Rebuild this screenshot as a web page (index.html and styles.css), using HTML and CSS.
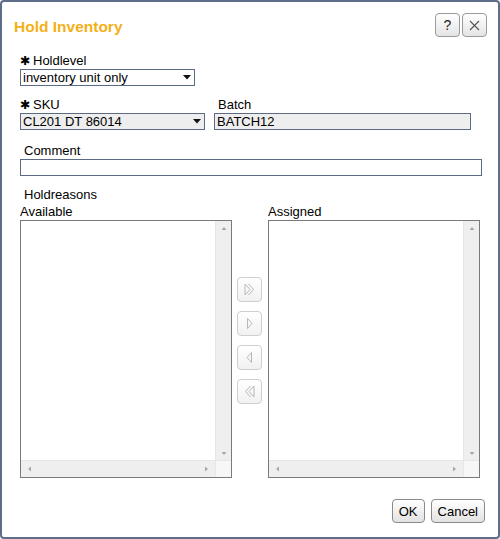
FILE: index.html
```html
<!DOCTYPE html>
<html>
<head>
<meta charset="utf-8">
<link rel="stylesheet" href="styles.css">
</head>
<body>
<div class="dialog">
  <div class="header">
    <div class="title">Hold Inventory</div>
    <div class="tools">
      <button class="tool">?</button>
      <button class="tool"><svg width="11" height="11" viewBox="0 0 11 11"><path d="M1 1 L10 10 M10 1 L1 10" stroke="#555" stroke-width="1.1" fill="none"/></svg></button>
    </div>
  </div>
  <div class="content">
    <div class="label req"><span class="star">✱</span>Holdlevel</div>
    <div class="select w1"><span>inventory unit only</span><svg class="caret" width="8" height="5" viewBox="0 0 8 5"><path d="M0 0 H8 L4 4.5 Z" fill="#111"/></svg></div>

    <div class="row2">
      <div class="col">
        <div class="label req"><span class="star">✱</span>SKU</div>
        <div class="select w2 ro"><span>CL201 DT 86014</span><svg class="caret" width="8" height="5" viewBox="0 0 8 5"><path d="M0 0 H8 L4 4.5 Z" fill="#111"/></svg></div>
      </div>
      <div class="col">
        <div class="label ind">Batch</div>
        <div class="input w3 ro">BATCH12</div>
      </div>
    </div>

    <div class="label ind mt13">Comment</div>
    <div class="input w4"></div>

    <div class="label ind mt11">Holdreasons</div>

    <div class="lists">
      <div class="listcol">
        <div class="label">Available</div>
        <div class="list">
          <div class="area"></div>
          <div class="vbar"><svg width="16" height="8" viewBox="0 0 16 8"><path d="M5.5 6 L10.5 6 L8 3 Z" fill="#a8a8a8"/></svg><svg width="16" height="8" viewBox="0 0 16 8"><path d="M5.5 2 L10.5 2 L8 5 Z" fill="#a8a8a8"/></svg></div>
          <div class="hbar"><svg width="8" height="16" viewBox="0 0 8 16"><path d="M6 5.5 L6 10.5 L3 8 Z" fill="#a8a8a8"/></svg><svg width="8" height="16" viewBox="0 0 8 16"><path d="M2 5.5 L2 10.5 L5 8 Z" fill="#a8a8a8"/></svg></div>
          <div class="corner"></div>
        </div>
      </div>
      <div class="mid">
        <button class="mv"><svg width="23" height="23" viewBox="0 0 23 23"><path d="M7 6 L12 11.5 L7 17 Z M10.5 6 L15.5 11.5 L10.5 17" stroke="#b8b8b8" fill="none"/></svg></button>
        <button class="mv"><svg width="23" height="23" viewBox="0 0 23 23"><path d="M9.5 6.5 L14 11.5 L9.5 16.5 Z" stroke="#b8b8b8" fill="none"/></svg></button>
        <button class="mv"><svg width="23" height="23" viewBox="0 0 23 23"><path d="M13.5 6.5 L9 11.5 L13.5 16.5 Z" stroke="#b8b8b8" fill="none"/></svg></button>
        <button class="mv"><svg width="23" height="23" viewBox="0 0 23 23"><path d="M16 6 L11 11.5 L16 17 Z M12.5 6 L7.5 11.5 L12.5 17" stroke="#b8b8b8" fill="none"/></svg></button>
      </div>
      <div class="listcol">
        <div class="label">Assigned</div>
        <div class="list">
          <div class="area"></div>
          <div class="vbar"><svg width="16" height="8" viewBox="0 0 16 8"><path d="M5.5 6 L10.5 6 L8 3 Z" fill="#a8a8a8"/></svg><svg width="16" height="8" viewBox="0 0 16 8"><path d="M5.5 2 L10.5 2 L8 5 Z" fill="#a8a8a8"/></svg></div>
          <div class="hbar"><svg width="8" height="16" viewBox="0 0 8 16"><path d="M6 5.5 L6 10.5 L3 8 Z" fill="#a8a8a8"/></svg><svg width="8" height="16" viewBox="0 0 8 16"><path d="M2 5.5 L2 10.5 L5 8 Z" fill="#a8a8a8"/></svg></div>
          <div class="corner"></div>
        </div>
      </div>
    </div>

    <div class="footer">
      <button class="btn">OK</button>
      <button class="btn">Cancel</button>
    </div>
  </div>
</div>
</body>
</html>
```
FILE: styles.css
```css
html, body {
  margin: 0;
  padding: 0;
  background: #ffffff;
}
body {
  font-family: "Liberation Sans", Arial, sans-serif;
  font-size: 13px;
  color: #000;
}
.dialog {
  box-sizing: border-box;
  width: 500px;
  height: 539px;
  border: 2px solid #5e6e88;
  border-radius: 4px;
  display: flex;
  flex-direction: column;
}
.header {
  display: flex;
  justify-content: space-between;
  align-items: flex-start;
  padding: 11px 11px 0 12px;
}
.title {
  margin-top: 5px;
  font-size: 15.5px;
  line-height: 17px;
  font-weight: bold;
  color: #f4b018;
}
.tools {
  display: flex;
  gap: 2px;
}
.tool {
  box-sizing: border-box;
  width: 25px;
  height: 24px;
  padding: 0;
  border: 1px solid #9a9a9a;
  border-radius: 4px;
  background: linear-gradient(#ffffff, #e4e4e4);
  font-family: "Liberation Sans", Arial, sans-serif;
  font-size: 14px;
  color: #222;
  display: flex;
  align-items: center;
  justify-content: center;
}
.content {
  padding: 0 0 0 18px;
  display: flex;
  flex-direction: column;
  flex: 1;
}
.label {
  line-height: 16px;
  height: 16px;
  white-space: nowrap;
}
.content > .req:first-child {
  margin-top: 16px;
}
.star {
  display: inline-block;
  width: 13px;
  font-family: "DejaVu Sans", sans-serif;
  font-size: 12.5px;
  line-height: 16px;
  vertical-align: top;
}
.ind {
  padding-left: 4px;
}
.mt13 { margin-top: 13px; }
.mt11 { margin-top: 11px; }
.select, .input {
  box-sizing: border-box;
  height: 17px;
  border: 1px solid #5b6b85;
  line-height: 15px;
  padding: 0 0 0 2px;
  background: #fff;
  display: flex;
  align-items: center;
  justify-content: space-between;
  white-space: nowrap;
}
.ro {
  background: #eeeeee;
}
.caret {
  margin-right: 3px;
}
.w1 { width: 175px; }
.w2 { width: 185px; }
.w3 { width: 257px; }
.w4 { width: 462px; }
.row2 {
  display: flex;
  gap: 9px;
  margin-top: 11px;
}
.lists {
  display: flex;
  margin-top: 1px;
}
.list {
  box-sizing: border-box;
  width: 212px;
  height: 258px;
  border: 1px solid #7a7a7a;
  display: grid;
  grid-template-columns: 1fr 16px;
  grid-template-rows: 1fr 17px;
  background: #fff;
}
.vbar {
  background: #efefef;
  border-left: 1px solid #e6e6e6;
  display: flex;
  flex-direction: column;
  justify-content: space-between;
  padding: 3px 0 2px;
}
.hbar {
  background: #efefef;
  border-top: 1px solid #e6e6e6;
  display: flex;
  justify-content: space-between;
  padding: 0 4px;
}
.corner {
  background: #f7f7f7;
  border-top: 1px solid #e6e6e6;
  border-left: 1px solid #e6e6e6;
}
.mid {
  width: 36px;
  box-sizing: border-box;
  padding: 73px 0 0 5px;
  display: flex;
  flex-direction: column;
  gap: 9px;
}
.mv {
  box-sizing: border-box;
  width: 25px;
  height: 25px;
  padding: 0;
  border: 1px solid #cfcfcf;
  border-radius: 4px;
  background: linear-gradient(#ffffff, #f1f1f1);
  display: flex;
  align-items: center;
  justify-content: center;
}
.footer {
  display: flex;
  justify-content: flex-end;
  gap: 6px;
  margin-top: 21px;
  padding-right: 13px;
}
.btn {
  box-sizing: border-box;
  height: 24px;
  padding: 0 6px;
  border: 1px solid #8a8a8a;
  border-radius: 4px;
  background: linear-gradient(#ffffff, #e2e2e2);
  font-family: "Liberation Sans", Arial, sans-serif;
  font-size: 13px;
  color: #000;
}
```
